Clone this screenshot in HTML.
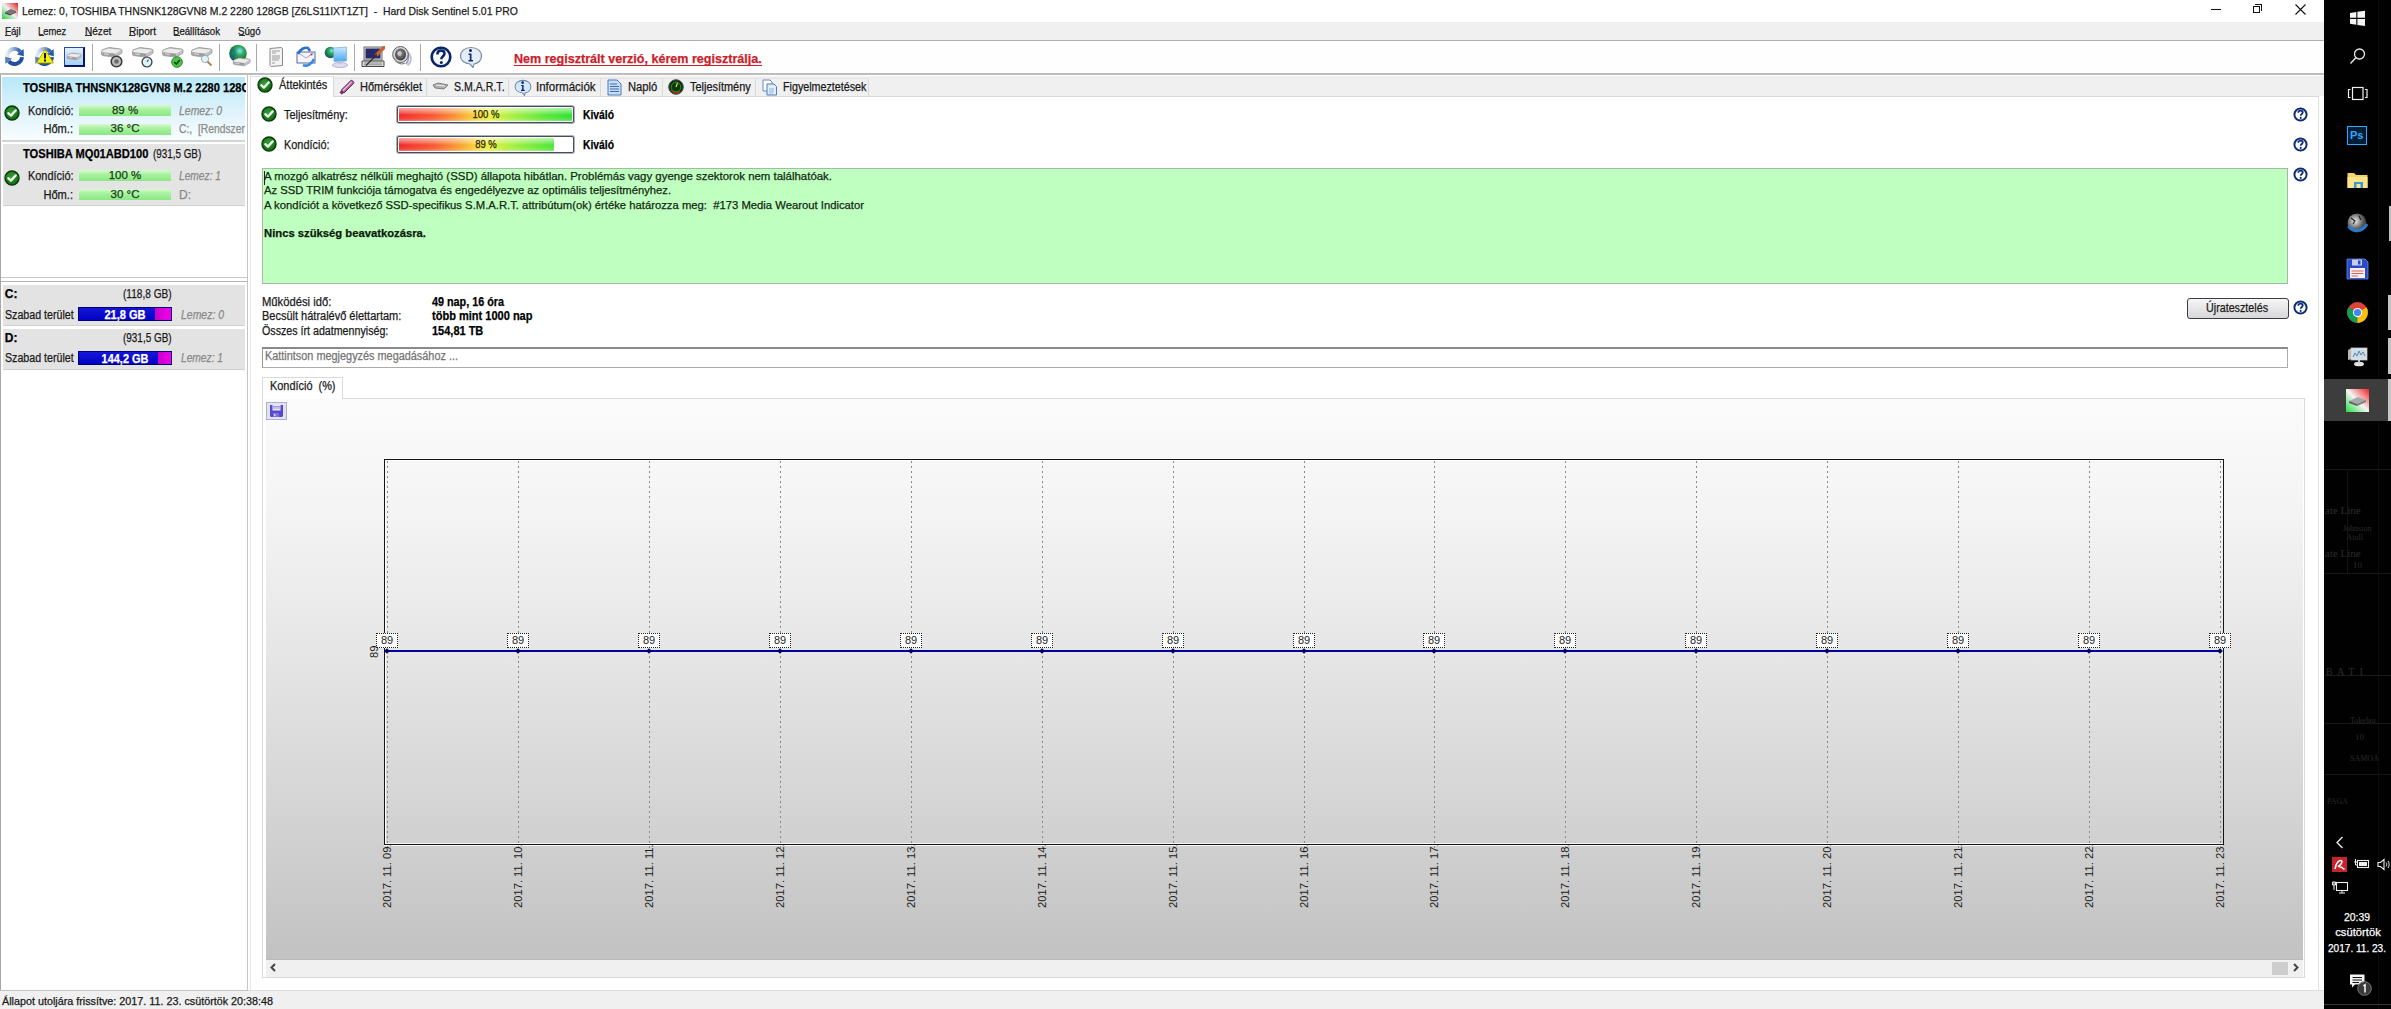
<!DOCTYPE html>
<html><head><meta charset="utf-8">
<style>
html,body{margin:0;padding:0}
body{width:2391px;height:1009px;overflow:hidden;position:relative;background:#fff;font-family:"Liberation Sans",sans-serif}
.a{position:absolute}
.t{position:absolute;line-height:1;white-space:pre;-webkit-text-stroke:0.25px currentColor}
.sep{position:absolute;top:44px;width:1px;height:27px;background:#a8a8a8;border-right:1px solid #fff}
.gbar{position:absolute;left:79px;width:92px;height:11px;background:linear-gradient(#d8fad0,#a8f2a0 40%,#8ae884)}
.bbar{position:absolute;left:78px;width:94px;height:14px;background:linear-gradient(#1818d8,#0000c4);box-shadow:inset 0 0 0 1px #000070}
.bbar i{position:absolute;top:1px;bottom:1px;right:1px;background:linear-gradient(90deg,#c800c8,#f000f0)}
.tab{position:absolute;top:78px;height:18px;background:#f0f0f0;border-top:1px solid #e3e3e3;border-right:1px solid #d9d9d9;box-sizing:border-box}
.pb{position:absolute;left:397px;width:177px;height:17px;margin-top:1px;box-sizing:border-box;border:1px solid #46505a;border-radius:2px;background:#fff;box-shadow:0 0 0 1px rgba(90,100,112,.5)}
.pbf{position:absolute;left:1px;top:1px;bottom:1px;background:linear-gradient(90deg,#f02828 0%,#f85830 20%,#f8a030 35%,#f8d838 45%,#e8f040 52%,#a8f040 65%,#58e838 85%,#30e030 100%)}
.pbf:after{content:"";position:absolute;left:0;right:0;top:0;bottom:0;background:linear-gradient(rgba(255,255,255,.6),rgba(255,255,255,.25) 35%,rgba(255,255,255,0) 55%,rgba(255,255,255,.1) 85%,rgba(255,255,255,.35))}
.help{position:absolute;left:2293px;width:15px;height:15px}
.grid{position:absolute;top:461px;height:388px;width:1px;background:repeating-linear-gradient(#8a8a8a 0 2px,transparent 2px 5px)}
.dl{position:absolute;top:633px;width:22px;height:15px;box-sizing:border-box;border:1px dotted #222;background:#fff;font-size:11px;line-height:13px;text-align:center;color:#222}
.dt{position:absolute;top:848px;width:60px;height:13px;font-size:11.2px;line-height:13px;color:#222;transform-origin:0 0;transform:rotate(-90deg);white-space:pre}
</style></head><body>

<!-- ============ TITLE BAR ============ -->
<svg class="a" style="left:2px;top:3px" width="16" height="16" viewBox="0 0 16 16">
  <defs><linearGradient id="appg" x1="1" y1="0" x2="0" y2="1"><stop offset="0" stop-color="#e02020"/><stop offset=".5" stop-color="#f0f0f0"/><stop offset="1" stop-color="#20d040"/></linearGradient></defs>
  <rect x="0" y="0" width="16" height="16" fill="url(#appg)"/>
  <path d="M3 9 L9 6 L14 8 L8 11 Z" fill="#777"/><path d="M3 9 L8 11 L8 12.5 L3 10.5Z" fill="#444"/><path d="M8 11 L14 8 L14 9.5 L8 12.5Z" fill="#555"/>
</svg>
<div class="a" style="left:2211px;top:9px;width:10px;height:1px;background:#111"></div>
<div class="a" style="left:2253px;top:6px;width:7px;height:7px;border:1px solid #111;box-sizing:border-box;background:#fff"></div>
<div class="a" style="left:2255px;top:4px;width:7px;height:2px;border-top:1px solid #111;border-right:1px solid #111;box-sizing:border-box"></div>
<div class="a" style="left:2261px;top:4px;width:1px;height:7px;background:#111"></div>
<svg class="a" style="left:2295px;top:4px" width="11" height="11"><path d="M0.5 0.5 L10.5 10.5 M10.5 0.5 L0.5 10.5" stroke="#111" stroke-width="1.1"/></svg>

<!-- ============ MENU BAR ============ -->
<div class="a" style="left:0;top:22px;width:2324px;height:18px;background:#f0f0f0"></div>
<div class="a" style="left:0;top:40px;width:2324px;height:1px;background:#b0b0b0"></div>
<div class="a" style="left:5px;top:35px;width:6px;height:1px;background:#333"></div>
<div class="a" style="left:39px;top:35px;width:5px;height:1px;background:#333"></div>
<div class="a" style="left:85px;top:35px;width:7px;height:1px;background:#333"></div>
<div class="a" style="left:129px;top:35px;width:6px;height:1px;background:#333"></div>
<div class="a" style="left:174px;top:35px;width:6px;height:1px;background:#333"></div>
<div class="a" style="left:239px;top:35px;width:6px;height:1px;background:#333"></div>

<!-- ============ TOOLBAR ============ -->
<div class="a" style="left:0;top:41px;width:2324px;height:32px;background:#fefefe"></div>
<div class="a" style="left:0;top:73px;width:2324px;height:2px;background:#bcbcbc"></div>
<div class="sep" style="left:92px"></div>
<div class="sep" style="left:219px"></div>
<div class="sep" style="left:256px"></div>
<div class="sep" style="left:354px"></div>
<div class="sep" style="left:420px"></div>
<div class="a" style="left:514px;top:64.5px;width:248px;height:1px;background:#cc1f2b"></div>

<!-- ============ LEFT PANEL ============ -->
<div class="a" style="left:0;top:75px;width:1px;height:916px;background:#a8a8a8"></div>
<div class="a" style="left:247px;top:75px;width:1px;height:916px;background:#c4c4c4"></div>
<div class="a" style="left:0;top:990px;width:248px;height:1px;background:#c4c4c4"></div>
<div class="a" style="left:1px;top:277px;width:246px;height:1px;background:#c8c8c8"></div>
<div class="a" style="left:1px;top:281px;width:246px;height:1px;background:#b4b4b4"></div>
<!-- item 1 -->
<div class="a" style="left:2px;top:77px;width:243px;height:63px;background:linear-gradient(#b8e8f8,#dff3fb 55%,#f8fdff)"></div>
<div class="a" style="left:2px;top:140px;width:243px;height:2px;background:#d4d4d4"></div>
<!-- item 2 -->
<div class="a" style="left:3px;top:144px;width:242px;height:61px;background:#e4e4e4"></div>
<div class="a" style="left:3px;top:205px;width:242px;height:1px;background:#d0d0d0"></div>
<div class="gbar" style="top:104.5px"></div>
<div class="gbar" style="top:123.5px"></div>
<div class="gbar" style="top:169.5px"></div>
<div class="gbar" style="top:188.5px"></div>
<!-- drives -->
<div class="a" style="left:3px;top:285px;width:242px;height:40px;background:#e3e3e3;border-bottom:1px solid #d0d0d0"></div>
<div class="a" style="left:3px;top:329px;width:242px;height:40px;background:#e3e3e3;border-bottom:1px solid #d0d0d0"></div>
<div class="bbar" style="top:307px"><i style="left:77px"></i></div>
<div class="bbar" style="top:351px"><i style="left:80px"></i></div>
<div class="a" style="left:0;top:75px;width:246px;height:140px;overflow:hidden">
<div class="a" style="left:0;top:-75px;width:246px;height:300px">
<div class="t" id="t8" style="left:22.6px;top:82.04px;font-size:12px;color:#000;font-weight:bold;transform:scaleX(0.9256);transform-origin:0 0;">TOSHIBA THNSNK128GVN8 M.2 2280 128GB</div>
<div class="t" id="t14" style="left:179px;top:122.84px;font-size:12px;color:#8a8a8a;transform:scaleX(0.8588);transform-origin:0 0;">C:,  [Rendszer fenntartott]</div>
</div></div>

<!-- ============ RIGHT PANEL ============ -->
<div class="a" style="left:250px;top:75px;width:1px;height:916px;background:#e4e4e4"></div>
<div class="a" style="left:2318px;top:97px;width:1px;height:894px;background:#e0e0e0"></div>
<div class="a" style="left:251px;top:76px;width:2073px;height:20px;background:#f0f0f0"></div>
<div class="a" style="left:251px;top:96px;width:2068px;height:1px;background:#d9d9d9"></div>
<div class="tab" style="left:334px;width:93px"></div>
<div class="tab" style="left:427px;width:82.4px"></div>
<div class="tab" style="left:509.4px;width:91.4px"></div>
<div class="tab" style="left:600.8px;width:62px"></div>
<div class="tab" style="left:662.8px;width:93.4px"></div>
<div class="tab" style="left:756.2px;width:113px"></div>
<div class="a" style="left:251px;top:76px;width:83px;height:21px;background:#fff;border-right:1px solid #d9d9d9;border-top:1px solid #e0e0e0;box-sizing:border-box"></div>

<!-- progress bars -->
<div class="pb" style="top:105px"><div class="pbf" style="width:173px"></div></div>
<div class="pb" style="top:135px"><div class="pbf" style="width:155px;background-image:linear-gradient(90deg,#f02828 0px,#f85830 35px,#f8a030 61px,#f8d838 78px,#e8f040 90px,#a8f040 112px,#58e838 147px,#30e030 173px)"></div></div>

<!-- green message box -->
<div class="a" style="left:262px;top:167.5px;width:2026px;height:116px;background:#bfffbf;border:1px solid #a8b8a8;box-sizing:border-box"></div>
<div class="a" style="left:264px;top:171px;width:1px;height:14px;background:#222"></div>

<!-- button -->
<div class="a" style="left:2186.5px;top:297.5px;width:102px;height:21px;box-sizing:border-box;border:1px solid #3a3a4a;border-radius:3px;background:linear-gradient(#f6f6f6,#e6e6e6 50%,#d8d8d8)"></div>
<!-- note box -->
<div class="a" style="left:262px;top:347px;width:2026px;height:21px;box-sizing:border-box;border:1px solid #ababab;border-top:2px solid #8a8a8a;border-left-color:#979797;background:#fff"></div>

<!-- chart tab panel -->
<div class="a" style="left:262px;top:397.5px;width:2043px;height:580px;box-sizing:border-box;border:1px solid #dadada;background:#fff"></div>
<div class="a" style="left:262px;top:376.5px;width:81px;height:22px;box-sizing:border-box;border:1px solid #dadada;border-bottom:none;background:#fff"></div>
<div class="a" style="left:266px;top:399px;width:2037px;height:561px;background:linear-gradient(#fbfbfb,#f4f4f4 20%,#e6e6e6 45%,#d6d6d6 70%,#c2c2c2)"></div>
<div class="a" style="left:266px;top:960px;width:2037px;height:17px;background:#f0f0f0"></div>
<div class="a" style="left:2272px;top:961.5px;width:16px;height:13px;background:#cdcdcd"></div>
<svg class="a" style="left:269px;top:963px" width="8" height="9"><path d="M6 1 L2.5 4.5 L6 8" stroke="#444" stroke-width="2" fill="none"/></svg>
<svg class="a" style="left:2292px;top:963px" width="8" height="9"><path d="M2 1 L5.5 4.5 L2 8" stroke="#444" stroke-width="2" fill="none"/></svg>
<!-- save button -->
<div class="a" style="left:266px;top:402px;width:20.5px;height:18px;box-sizing:border-box;border:1px solid #aeb0cc;background:#e2e2f2"></div>
<svg class="a" style="left:269px;top:404px" width="15" height="14" viewBox="0 0 15 14">
  <path d="M1 1 H14 V12 L13 13 H2 L1 12 Z" fill="#5a48c8"/>
  <rect x="3.5" y="1" width="8" height="5.5" fill="#e8e8ff"/><path d="M4 2.5 H11 M4 4 H11" stroke="#8a80d0" stroke-width=".8"/>
  <rect x="4" y="9" width="6" height="4" fill="#7a70e0"/><rect x="5" y="10" width="1.5" height="2" fill="#d0d0ff"/>
</svg>

<div class="a" style="left:384px;top:459px;width:1840px;height:386px;box-sizing:border-box;border:1px solid #141414;box-shadow:inset 1px 1px 0 #fff,inset 0 -1px 0 rgba(255,255,255,.85),0 -1px 0 rgba(255,255,255,.9),0 1px 0 rgba(255,255,255,.85)"></div>
<div class="grid" style="left:387px"></div>
<div class="grid" style="left:518px"></div>
<div class="grid" style="left:649px"></div>
<div class="grid" style="left:780px"></div>
<div class="grid" style="left:911px"></div>
<div class="grid" style="left:1042px"></div>
<div class="grid" style="left:1173px"></div>
<div class="grid" style="left:1304px"></div>
<div class="grid" style="left:1434px"></div>
<div class="grid" style="left:1565px"></div>
<div class="grid" style="left:1696px"></div>
<div class="grid" style="left:1827px"></div>
<div class="grid" style="left:1958px"></div>
<div class="grid" style="left:2089px"></div>
<div class="grid" style="left:2220px"></div>
<div class="a" style="left:385px;top:650px;width:1836px;height:2px;background:#00009a"></div>
<div class="a" style="left:385px;top:648.5px;width:4px;height:4px;background:#000060;transform:rotate(45deg)"></div>
<div class="a" style="left:516px;top:648.5px;width:4px;height:4px;background:#000060;transform:rotate(45deg)"></div>
<div class="a" style="left:647px;top:648.5px;width:4px;height:4px;background:#000060;transform:rotate(45deg)"></div>
<div class="a" style="left:778px;top:648.5px;width:4px;height:4px;background:#000060;transform:rotate(45deg)"></div>
<div class="a" style="left:909px;top:648.5px;width:4px;height:4px;background:#000060;transform:rotate(45deg)"></div>
<div class="a" style="left:1040px;top:648.5px;width:4px;height:4px;background:#000060;transform:rotate(45deg)"></div>
<div class="a" style="left:1171px;top:648.5px;width:4px;height:4px;background:#000060;transform:rotate(45deg)"></div>
<div class="a" style="left:1302px;top:648.5px;width:4px;height:4px;background:#000060;transform:rotate(45deg)"></div>
<div class="a" style="left:1432px;top:648.5px;width:4px;height:4px;background:#000060;transform:rotate(45deg)"></div>
<div class="a" style="left:1563px;top:648.5px;width:4px;height:4px;background:#000060;transform:rotate(45deg)"></div>
<div class="a" style="left:1694px;top:648.5px;width:4px;height:4px;background:#000060;transform:rotate(45deg)"></div>
<div class="a" style="left:1825px;top:648.5px;width:4px;height:4px;background:#000060;transform:rotate(45deg)"></div>
<div class="a" style="left:1956px;top:648.5px;width:4px;height:4px;background:#000060;transform:rotate(45deg)"></div>
<div class="a" style="left:2087px;top:648.5px;width:4px;height:4px;background:#000060;transform:rotate(45deg)"></div>
<div class="a" style="left:2218px;top:648.5px;width:4px;height:4px;background:#000060;transform:rotate(45deg)"></div>
<div class="dl" style="left:376px">89</div>
<div class="dt" style="left:380.5px;top:908px">2017. 11. 09.</div>
<div class="dl" style="left:507px">89</div>
<div class="dt" style="left:511.5px;top:908px">2017. 11. 10.</div>
<div class="dl" style="left:638px">89</div>
<div class="dt" style="left:642.5px;top:908px">2017. 11. 11.</div>
<div class="dl" style="left:769px">89</div>
<div class="dt" style="left:773.5px;top:908px">2017. 11. 12.</div>
<div class="dl" style="left:900px">89</div>
<div class="dt" style="left:904.5px;top:908px">2017. 11. 13.</div>
<div class="dl" style="left:1031px">89</div>
<div class="dt" style="left:1035.5px;top:908px">2017. 11. 14.</div>
<div class="dl" style="left:1162px">89</div>
<div class="dt" style="left:1166.5px;top:908px">2017. 11. 15.</div>
<div class="dl" style="left:1293px">89</div>
<div class="dt" style="left:1297.5px;top:908px">2017. 11. 16.</div>
<div class="dl" style="left:1423px">89</div>
<div class="dt" style="left:1427.5px;top:908px">2017. 11. 17.</div>
<div class="dl" style="left:1554px">89</div>
<div class="dt" style="left:1558.5px;top:908px">2017. 11. 18.</div>
<div class="dl" style="left:1685px">89</div>
<div class="dt" style="left:1689.5px;top:908px">2017. 11. 19.</div>
<div class="dl" style="left:1816px">89</div>
<div class="dt" style="left:1820.5px;top:908px">2017. 11. 20.</div>
<div class="dl" style="left:1947px">89</div>
<div class="dt" style="left:1951.5px;top:908px">2017. 11. 21.</div>
<div class="dl" style="left:2078px">89</div>
<div class="dt" style="left:2082.5px;top:908px">2017. 11. 22.</div>
<div class="dl" style="left:2209px">89</div>
<div class="dt" style="left:2213.5px;top:908px">2017. 11. 23.</div>
<div class="dt" style="left:368px;top:658px;width:14px">89</div>

<!-- status bar -->
<div class="a" style="left:0;top:991px;width:2324px;height:18px;background:#f0f0f0"></div>
<div class="a" style="left:248px;top:990px;width:2076px;height:1px;background:#dedede"></div>
<div class="a" style="left:266px;top:959px;width:2037px;height:1px;background:#bababa"></div>

<!-- ============ TASKBAR ============ -->
<div class="a" style="left:2324px;top:0;width:67px;height:1009px;background:#010101"></div>
<!-- faint wallpaper lines -->
<div class="a" style="left:2378px;top:0;width:1px;height:1009px;background:#0c0c0c"></div>
<div class="a" style="left:2324px;top:1004px;width:67px;height:1px;background:#3a3a3a"></div>
<!-- windows logo -->
<svg class="a" style="left:2349px;top:10px" width="17" height="17" viewBox="0 0 17 17"><path d="M1 3 L7.3 2 L7.3 7.8 L1 7.8 Z M8.4 1.8 L16 0.7 L16 7.8 L8.4 7.8 Z M1 8.9 L7.3 8.9 L7.3 14.7 L1 13.8 Z M8.4 8.9 L16 8.9 L16 16 L8.4 14.9 Z" fill="#f4f4f4"/></svg>
<!-- search -->
<svg class="a" style="left:2349px;top:47px" width="17" height="18" viewBox="0 0 17 18"><circle cx="10.5" cy="7" r="5" fill="none" stroke="#e8e8e8" stroke-width="1.3"/><path d="M7 10.5 L1.5 16.5" stroke="#e8e8e8" stroke-width="1.4"/></svg>
<!-- task view -->
<svg class="a" style="left:2347px;top:86px" width="22" height="15" viewBox="0 0 22 15"><rect x="5.5" y="1.5" width="10.5" height="12" fill="none" stroke="#f0f0f0" stroke-width="1.2"/><path d="M3.5 3.5 H1.5 V11.5 H3.5 M18 3.5 H20 V11.5 H18" fill="none" stroke="#f0f0f0" stroke-width="1.2"/></svg>
<!-- Ps -->
<div class="a" style="left:2347px;top:126px;width:20px;height:18.5px;box-sizing:border-box;border:1.5px solid #31a8ff;background:#001e36"></div>
<div class="a" style="left:2350px;top:128px;font:bold 11px/14px 'Liberation Sans',sans-serif;color:#31a8ff">Ps</div>
<!-- folder -->
<svg class="a" style="left:2347px;top:172px" width="21" height="17" viewBox="0 0 21 17"><path d="M0.5 1 H7 L9 3 H20.5 V16 H0.5 Z" fill="#f6d36a"/><path d="M0.5 5 H20.5 V16 H0.5 Z" fill="#fde48a"/><rect x="7" y="10" width="9" height="6" fill="#3a98d8"/><rect x="9.5" y="12" width="4" height="4" fill="#fde48a"/></svg>
<!-- globe -->
<svg class="a" style="left:2346px;top:212px" width="23" height="22" viewBox="0 0 23 22"><defs><radialGradient id="tbg" cx=".4" cy=".4" r=".6"><stop offset="0" stop-color="#f0f0f0"/><stop offset=".6" stop-color="#707070"/><stop offset="1" stop-color="#303030"/></radialGradient></defs><circle cx="11" cy="11" r="9.5" fill="url(#tbg)"/><path d="M2.5 14 C6 20 16 21 21 12" stroke="#2a7ad0" stroke-width="3" fill="none"/><path d="M5 6 L9 9 L7 12 M13 4 L15 8" stroke="#222" stroke-width="1.2" fill="none"/></svg>
<div class="a" style="left:2389px;top:206px;width:2px;height:35px;background:#c0c0c0"></div>
<!-- floppy -->
<svg class="a" style="left:2346px;top:257.5px" width="23" height="22" viewBox="0 0 23 22"><path d="M1 1 H19 L22 4 V21 H1 Z" fill="#2a4ac8" stroke="#6a8af0" stroke-width=".8"/><rect x="6" y="1.5" width="10" height="6" fill="#c8d0f0"/><rect x="12" y="2.5" width="2.5" height="4" fill="#2a4ac8"/><rect x="4" y="10" width="15" height="10" fill="#f8f0f0"/><path d="M5.5 13 H17.5 M5.5 15.5 H17.5 M5.5 18 H12" stroke="#d05050" stroke-width=".9"/></svg>
<!-- chrome -->
<svg class="a" style="left:2346px;top:301px" width="23" height="23" viewBox="0 0 23 23"><circle cx="11.5" cy="11.5" r="10.4" fill="#db4437"/><path d="M11.5 11.5 L2.5 6.3 A10.4 10.4 0 0 0 11.5 21.9 Z" fill="#0f9d58"/><path d="M11.5 11.5 L11.5 21.9 A10.4 10.4 0 0 0 20.5 6.3 Z" fill="#f4c20d"/><path d="M11.5 11.5 L20.5 6.3 L11.5 6.3Z" fill="#db4437"/><circle cx="11.5" cy="11.5" r="4.6" fill="#fff"/><circle cx="11.5" cy="11.5" r="3.6" fill="#4285f4"/></svg>
<div class="a" style="left:2387.5px;top:294.5px;width:3.5px;height:35px;background:#c4c4c4"></div>
<!-- monitor -->
<svg class="a" style="left:2347px;top:346px" width="21" height="21" viewBox="0 0 21 21"><path d="M1 4 L5 2 L5 13 L1 14 Z" fill="#b8b8b8"/><rect x="4" y="2" width="16" height="12" fill="#e8e8e8" stroke="#c0c0c0" stroke-width=".8"/><rect x="5.5" y="3.5" width="13" height="9" fill="#c8dcec"/><path d="M6 11 L8 7 L10 10 L12 5 L14 9 L16 6 L18 10" stroke="#5a7a9a" stroke-width=".9" fill="none"/><ellipse cx="12" cy="18" rx="5" ry="2.3" fill="#e0e0e0"/><rect x="11" y="14" width="2" height="3" fill="#c8c8c8"/></svg>
<div class="a" style="left:2387.5px;top:338px;width:3.5px;height:36px;background:#c4c4c4"></div>
<!-- HDS active -->
<div class="a" style="left:2324px;top:378.5px;width:63.5px;height:42.5px;background:#3d3d3d"></div>
<div class="a" style="left:2387.5px;top:378.5px;width:3.5px;height:42.5px;background:#c8c8c8"></div>
<svg class="a" style="left:2346px;top:388.5px" width="23" height="23" viewBox="0 0 23 23"><defs><linearGradient id="hdsg" x1="1" y1="0" x2="0" y2="1"><stop offset="0" stop-color="#f02020"/><stop offset=".5" stop-color="#f4f4f4"/><stop offset="1" stop-color="#20e040"/></linearGradient></defs><rect x="0" y="0" width="23" height="23" fill="url(#hdsg)"/><path d="M3 12 L12 8 L20 11 L11 15 Z" fill="#a8a8a8"/><path d="M3 12 L11 15 L11 17 L3 14Z" fill="#606060"/><path d="M11 15 L20 11 L20 13 L11 17Z" fill="#7a7a7a"/></svg>
<!-- tray -->
<svg class="a" style="left:2335px;top:836px" width="9" height="13" viewBox="0 0 9 13"><path d="M7.5 1 L2 6.5 L7.5 12" stroke="#f0f0f0" stroke-width="1.3" fill="none"/></svg>
<div class="a" style="left:2332px;top:856.5px;width:15px;height:15px;background:#c8232c"></div>
<svg class="a" style="left:2332px;top:856.5px" width="15" height="15" viewBox="0 0 15 15"><path d="M3 12 C4 6 7 3 9 3.5 C11 4 9.5 8 6 9.5 C8 9 10 10 12.5 12.5" stroke="#fff" stroke-width="1.5" fill="none"/></svg>
<svg class="a" style="left:2353px;top:858px" width="17" height="11" viewBox="0 0 17 11"><rect x="4.5" y="2.5" width="11" height="7" fill="none" stroke="#eee" stroke-width="1.1"/><rect x="6" y="4" width="8" height="4" fill="#eee"/><path d="M2.5 1 V4 M1 4 H4 M2.5 4 V7 H4.5" stroke="#eee" stroke-width="1" fill="none"/></svg>
<svg class="a" style="left:2377px;top:858px" width="14" height="13" viewBox="0 0 14 13"><path d="M1 4.5 H3.5 L7 1.5 V11.5 L3.5 8.5 H1 Z" fill="none" stroke="#eee" stroke-width="1.1"/><path d="M9 4.5 C10 5.5 10 7.5 9 8.5 M11 3 C12.5 5 12.5 8 11 10" stroke="#eee" stroke-width="1" fill="none"/></svg>
<svg class="a" style="left:2332px;top:881px" width="16" height="13" viewBox="0 0 16 13"><rect x="4.5" y="1.5" width="11" height="8" fill="none" stroke="#eee" stroke-width="1.1"/><path d="M10 9.5 V12 M7 12 H13 M2 1 V9 M0.5 1 H3.5 V4 H0.5 Z" stroke="#eee" stroke-width="1" fill="none"/></svg>
<!-- notifications -->
<svg class="a" style="left:2349px;top:973px" width="24" height="24" viewBox="0 0 24 24"><path d="M1 1.5 H15.5 V11.5 H6 L3 14.5 V11.5 H1 Z" fill="#f4f4f4"/><path d="M3.5 4.5 H13 M3.5 7 H13 M3.5 9.5 H10" stroke="#111" stroke-width="1"/><circle cx="15.5" cy="15.5" r="6.8" fill="#3a3a3a" stroke="#777" stroke-width="1"/><path d="M14.3 12.8 L16 11.8 V19.5" stroke="#fff" stroke-width="1.5" fill="none"/></svg>

<!-- faint wallpaper -->
<div class="a" style="left:2324px;top:469px;width:67px;height:1px;background:#1a1a1a"></div>
<div class="a" style="left:2324px;top:573px;width:67px;height:1px;background:#161616"></div>
<div class="a" style="left:2324px;top:675px;width:67px;height:1px;background:#1a1a1a"></div>
<div class="a" style="left:2324px;top:723px;width:67px;height:1px;background:#181818"></div>
<div class="a" style="left:2324px;top:774px;width:67px;height:1px;background:#161616"></div>
<div class="a" style="left:2347px;top:469px;width:1px;height:105px;background:#141414"></div>
<div class="a" style="left:2325px;top:504px;font:11px/12px 'Liberation Serif',serif;color:#2c2c2c;white-space:pre">ate Line</div>
<div class="a" style="left:2343px;top:524px;font:8px/9px 'Liberation Serif',serif;color:#2a2a2a;white-space:pre">Johnston
  Atoll</div>
<div class="a" style="left:2325px;top:547px;font:11px/12px 'Liberation Serif',serif;color:#2c2c2c;white-space:pre">ate Line</div>
<div class="a" style="left:2353px;top:560px;font:9px/10px 'Liberation Serif',serif;color:#2a2a2a">10</div>
<div class="a" style="left:2326px;top:666px;font:10px/11px 'Liberation Serif',serif;color:#2c2c2c;white-space:pre">B  A  T  I</div>
<div class="a" style="left:2350px;top:716px;font:8px/9px 'Liberation Serif',serif;color:#2a2a2a">Tokelau</div>
<div class="a" style="left:2355px;top:732px;font:9px/10px 'Liberation Serif',serif;color:#2a2a2a">10</div>
<div class="a" style="left:2350px;top:754px;font:8px/9px 'Liberation Serif',serif;color:#2a2a2a">SAMOA</div>
<div class="a" style="left:2327px;top:797px;font:8px/9px 'Liberation Serif',serif;color:#262626">PAGA</div>


<svg width="0" height="0" style="position:absolute"><defs>
 <linearGradient id="arcA" x1="0" y1="0" x2="1" y2="0"><stop offset="0" stop-color="#e8eef8"/><stop offset=".45" stop-color="#9ab4d8"/><stop offset="1" stop-color="#2a5aa8"/></linearGradient>
 <radialGradient id="chk" cx=".45" cy=".4" r=".6"><stop offset="0" stop-color="#3a9a3a"/><stop offset="1" stop-color="#126a12"/></radialGradient>
 <linearGradient id="slab" x1="0" y1="0" x2="0" y2="1"><stop offset="0" stop-color="#f0f0f0"/><stop offset=".5" stop-color="#c8c8c8"/><stop offset="1" stop-color="#8a8a8a"/></linearGradient>
 <radialGradient id="globe" cx=".6" cy=".35" r=".7"><stop offset="0" stop-color="#80e8ff"/><stop offset=".35" stop-color="#30a860"/><stop offset=".7" stop-color="#1a7a3a"/><stop offset="1" stop-color="#1040b0"/></radialGradient>
 <linearGradient id="mon" x1="0" y1="0" x2="0" y2="1"><stop offset="0" stop-color="#c8ecff"/><stop offset="1" stop-color="#48a8f0"/></linearGradient>
 <symbol id="disk" viewBox="0 0 23 11"><path d="M1.5 4.5 Q1.5 3.2 3 2.6 L8 0.8 Q9 0.5 10 0.6 L20.5 2 Q22 2.3 22 3.5 L22 5.5 Q22 6.3 21 6.8 L15.5 9.8 Q14.8 10.2 13.8 10.1 L2.8 8.6 Q1.5 8.3 1.5 7.2 Z" fill="#b4b4b4" stroke="#8c8c8c" stroke-width=".7"/><path d="M2 4.6 Q2 3.6 3.5 3.1 L8.3 1.4 L20.5 2.8 Q21.5 3 20.8 3.6 L15.5 6.6 L3 5.3 Z" fill="#ececec"/><path d="M3 5.6 L15 7 L15 9.5 L3 8 Z" fill="#9a9a9a"/><path d="M15.3 7 L21.4 3.8 L21.4 6 L15.3 9.3 Z" fill="#c4c4c4"/><path d="M4 6.8 L9 7.4" stroke="#f4f4f4" stroke-width=".8"/></symbol>
 <symbol id="chkI" viewBox="0 0 16 16"><circle cx="8" cy="8" r="7" fill="url(#chk)" stroke="#0a3a0a" stroke-width="1.4"/><path d="M4.3 8.2 L6.9 10.6 L11.7 5.4" stroke="#e8ffe8" stroke-width="2.3" fill="none" stroke-linecap="round" stroke-linejoin="round"/></symbol>
 <symbol id="helpI" viewBox="0 0 16 16"><circle cx="8" cy="8" r="6.5" fill="#fff" stroke="#0e2c70" stroke-width="2.1"/><path d="M5.6 6.2 C5.6 4.6 6.7 3.8 8 3.8 C9.4 3.8 10.4 4.7 10.4 5.9 C10.4 7.4 8.2 7.6 8.2 9.4" stroke="#0e2c70" stroke-width="1.9" fill="none"/><circle cx="8.2" cy="11.6" r="1.1" fill="#0e2c70"/></symbol>
</defs></svg>

<!-- refresh -->
<svg class="a" style="left:3px;top:45px" width="24" height="24" viewBox="0 0 24 24">
 <path d="M4.1 12.8 A7.5 7.5 0 0 1 17.25 6.68" stroke="url(#arcA)" stroke-width="4" fill="none"/>
 <path d="M13.9 9.5 L20.6 3.9 L20.9 11.2 Z" fill="#2a5aa8"/>
 <path d="M18.97 12.15 A7.5 7.5 0 0 1 5.75 16.3" stroke="#22509e" stroke-width="4" fill="none"/>
 <path d="M9.1 13.6 L2.4 19.1 L2.1 11.8 Z" fill="#5a80b8"/>
</svg>
<!-- warning refresh -->
<svg class="a" style="left:33px;top:45px" width="24" height="24" viewBox="0 0 24 24">
 <path d="M4.1 12.8 A7.5 7.5 0 0 1 17.25 6.68" stroke="url(#arcA)" stroke-width="4" fill="none"/>
 <path d="M13.9 9.5 L20.6 3.9 L20.9 11.2 Z" fill="#2a5aa8"/>
 <path d="M18.97 12.15 A7.5 7.5 0 0 1 5.75 16.3" stroke="#22509e" stroke-width="4" fill="none"/>
 <path d="M9.1 13.6 L2.4 19.1 L2.1 11.8 Z" fill="#5a80b8"/>
 <path d="M12 4.5 L20.5 18 L3.5 18 Z" fill="#f4f010" stroke="#a8a000" stroke-width=".8"/>
 <rect x="11" y="8" width="2" height="5.5" fill="#111"/><rect x="11" y="14.5" width="2" height="2" fill="#111"/>
</svg>
<!-- disk box -->
<div class="a" style="left:64px;top:46.5px;width:21px;height:20.5px;box-sizing:border-box;border:1px solid #2848a8;border-right:2px solid #0a1660;border-bottom:2px solid #0a1660;background:linear-gradient(#e0f0ff,#a8d0f4)"></div>
<svg class="a" style="left:66px;top:52px" width="16" height="9"><use href="#disk" width="16" height="9"/></svg>
<!-- disks -->
<svg class="a" style="left:100px;top:46.5px" width="23" height="11"><use href="#disk" width="23" height="11"/></svg>
<svg class="a" style="left:110px;top:55px" width="13" height="13" viewBox="0 0 13 13"><circle cx="6.5" cy="6.5" r="5.3" fill="#bdbdbd" stroke="#3a3a3a" stroke-width="1.6"/><circle cx="6.5" cy="6.5" r="2.3" fill="#6a6a6a"/></svg>
<svg class="a" style="left:130.5px;top:46.5px" width="23" height="11"><use href="#disk" width="23" height="11"/></svg>
<svg class="a" style="left:140.5px;top:56px" width="12" height="12" viewBox="0 0 12 12"><circle cx="6" cy="6" r="4.9" fill="#e0f4fc" stroke="#4a4a4a" stroke-width="1.4"/><path d="M6 6 L7.5 3.5" stroke="#3a6a9a" stroke-width="1.3"/></svg>
<svg class="a" style="left:160.5px;top:46.5px" width="23" height="11"><use href="#disk" width="23" height="11"/></svg>
<svg class="a" style="left:170.5px;top:56px" width="12" height="12" viewBox="0 0 12 12"><circle cx="6" cy="6" r="5.3" fill="#50c050" stroke="#2a8a2a" stroke-width="1"/><path d="M3.2 6 L5.3 8 L8.8 4" stroke="#0a4a0a" stroke-width="1.6" fill="none"/></svg>
<svg class="a" style="left:190px;top:46.5px" width="23" height="11"><use href="#disk" width="23" height="11"/></svg>
<svg class="a" style="left:200px;top:54px" width="13" height="13" viewBox="0 0 13 13"><circle cx="5" cy="5" r="3.6" fill="#dff4fa" stroke="#9ab0b8" stroke-width="1"/><path d="M7.5 7.5 L11.5 11.5" stroke="#b08040" stroke-width="1.8"/></svg>
<!-- globe + disk -->
<svg class="a" style="left:228px;top:44px" width="24" height="24" viewBox="0 0 24 24"><circle cx="10" cy="9.5" r="8.8" fill="url(#globe)"/><path d="M4 5 C7 7 8 10 5 14" stroke="#2060c0" stroke-width="2" fill="none" opacity=".6"/></svg>
<svg class="a" style="left:232px;top:57px" width="19" height="10"><use href="#disk" width="19" height="10"/></svg>
<!-- doc -->
<svg class="a" style="left:269px;top:47px" width="15" height="20" viewBox="0 0 15 20"><path d="M1 1.5 L12 0.5 L13.5 1.5 L13.5 18.5 L2 19.5 L1 18.5 Z" fill="#f4f4f4" stroke="#8a8a8a" stroke-width="1"/><path d="M3 4 H11 M3 6 H7 M3 9 H11 M3 11 H11 M3 13 H10 M3 16 H6" stroke="#9a9a9a" stroke-width="1.1"/></svg>
<!-- sync mail -->
<svg class="a" style="left:296px;top:46px" width="20" height="22" viewBox="0 0 20 22"><rect x="1" y="6" width="18" height="11" fill="#f4f4fa" stroke="#5a6a9a" stroke-width="1"/><path d="M1 6 L10 12 L19 6" stroke="#9aa8c8" fill="none"/><path d="M2 8 C4 3 9 1 12 2 L14 5" stroke="#2a70d0" stroke-width="2.6" fill="none"/><path d="M18 13 C16 18 11 21 7 19" stroke="#3a88e0" stroke-width="2.6" fill="none"/><circle cx="15.5" cy="8.5" r="1" fill="#c03040"/></svg>
<!-- globe monitor -->
<svg class="a" style="left:324px;top:46px" width="25" height="22" viewBox="0 0 25 22"><circle cx="6.5" cy="6.5" r="5.8" fill="url(#globe)"/><path d="M9.5 2 L22.5 1 L22.5 15 L10 15.5 Z" fill="url(#mon)" stroke="#8ab0d0" stroke-width=".8"/><ellipse cx="16" cy="19" rx="7.5" ry="2.6" fill="#dcdcec" stroke="#a8a8c8" stroke-width=".8"/><rect x="14.5" y="15" width="3" height="3" fill="#b8c8d8"/></svg>
<!-- laptop tools -->
<svg class="a" style="left:361px;top:46px" width="24" height="23" viewBox="0 0 24 23"><rect x="3" y="1" width="18" height="13" fill="#d8d8d8" stroke="#707070" stroke-width="1"/><rect x="4.5" y="2.5" width="15" height="10" fill="#2a2a6a"/><path d="M1 15 L23 15 L23 20.5 L1 20.5 Z" fill="#dedede" stroke="#4a4a4a" stroke-width="1"/><path d="M3 17 H21 M3 18.8 H21" stroke="#7a7a7a" stroke-width=".8"/><path d="M23 1.5 L16 8.5" stroke="#c86030" stroke-width="3.5" stroke-linecap="round"/><path d="M16 8.5 L5 19.5" stroke="#303030" stroke-width="1.3"/></svg>
<!-- speaker -->
<svg class="a" style="left:392px;top:46px" width="23" height="21" viewBox="0 0 23 21"><defs><radialGradient id="spk" cx=".45" cy=".4" r=".6"><stop offset="0" stop-color="#b0b0b0"/><stop offset=".5" stop-color="#6a6a6a"/><stop offset="1" stop-color="#3a3a3a"/></radialGradient></defs><path d="M13 4 C17 7 18 13 14 18" stroke="#9a9ab8" stroke-width="1.6" fill="none"/><path d="M16 6.5 C20 10 20 16 15.5 19.5" stroke="#b8b8d8" stroke-width="1.6" fill="none"/><ellipse cx="8.5" cy="8.5" rx="7.8" ry="8" fill="#d8d8d8" stroke="#5a5a5a" stroke-width="1"/><ellipse cx="8.5" cy="8.5" rx="5.5" ry="6" fill="url(#spk)"/><ellipse cx="7.5" cy="7.5" rx="2" ry="2.3" fill="#c8c8c8"/><path d="M2 12 C4 17 9 19 13 17" stroke="#8a8a8a" stroke-width="1.3" fill="none"/></svg>
<!-- help -->
<svg class="a" style="left:429.5px;top:46px" width="22" height="22" viewBox="0 0 22 22"><circle cx="11" cy="11" r="9.3" fill="#f4f8ff" stroke="#0a2468" stroke-width="2.6"/><path d="M7.4 8.4 C7.4 5.8 9.2 4.6 11 4.6 C13 4.6 14.5 5.9 14.5 7.7 C14.5 10.2 11.3 10.4 11.3 13.2" stroke="#0a2468" stroke-width="2.5" fill="none"/><circle cx="11.3" cy="16.5" r="1.5" fill="#0a2468"/></svg>
<!-- info bubble -->
<svg class="a" style="left:458.5px;top:46px" width="24" height="22" viewBox="0 0 24 22"><path d="M12 1.5 C18 1.5 22.5 5 22.5 10 C22.5 14.5 19 17.5 15 18 L14 21.5 L11 18 C5.5 17.7 1.5 14.5 1.5 10 C1.5 5 6 1.5 12 1.5 Z" fill="#e4eef8" stroke="#7a8a9a" stroke-width="1.2"/><circle cx="11.5" cy="4.5" r="1.5" fill="#0e2a70"/><path d="M9.5 7.5 H12.5 V14 H14 V15.5 H9.5 V14 H10.8 V9 H9.5 Z" fill="#0e2a70"/></svg>

<!-- left panel check icons -->
<svg class="a" style="left:4px;top:104.5px" width="16" height="16"><use href="#chkI"/></svg>
<svg class="a" style="left:4px;top:170px" width="16" height="16"><use href="#chkI"/></svg>
<!-- tab icons -->
<svg class="a" style="left:256.5px;top:76.5px" width="16" height="16"><use href="#chkI"/></svg>
<svg class="a" style="left:338px;top:78px" width="18" height="18" viewBox="0 0 18 18"><path d="M3.2 12.2 L12.6 2.8 Q13.6 1.8 14.8 3 L15.3 3.5 Q16.4 4.6 15.4 5.6 L6 15 Z" fill="#b8609e" stroke="#5a2a50" stroke-width="1"/><path d="M5 12.5 L13.6 3.9" stroke="#f4c8e8" stroke-width="1.1"/><path d="M3.2 12.2 L6 15 L3.5 16.5 L1.6 14.6 Z" fill="#6a3a60"/></svg>
<svg class="a" style="left:432px;top:81px" width="18" height="11" viewBox="0 0 18 11"><path d="M1 4 L6 2 L16 4 L12 8 L3 7 Z" fill="#b0b0b0" stroke="#6a6a6a" stroke-width=".8"/><path d="M4 4 L13 5" stroke="#fff" stroke-width=".8"/></svg>
<svg class="a" style="left:514px;top:78.5px" width="18" height="17" viewBox="0 0 24 22"><path d="M12 1.5 C18 1.5 22.5 5 22.5 10 C22.5 14.5 19 17.5 15 18 L14 21.5 L11 18 C5.5 17.7 1.5 14.5 1.5 10 C1.5 5 6 1.5 12 1.5 Z" fill="#d4e6f8" stroke="#6a8aaa" stroke-width="1.4"/><circle cx="11.5" cy="4.5" r="1.8" fill="#0e2a70"/><path d="M9.5 7.5 H12.8 V14 H14.3 V15.8 H9.3 V14 H10.8 V9 H9.5 Z" fill="#0e2a70"/></svg>
<svg class="a" style="left:607px;top:79px" width="15" height="17" viewBox="0 0 15 17"><path d="M1 1 L10 1 L14 5 L14 16 L1 16 Z" fill="#c8dcf4" stroke="#4a7ac0" stroke-width="1"/><path d="M3 5 H10 M3 7.5 H12 M3 10 H12 M3 12.5 H12" stroke="#3a6ab8" stroke-width="1.1"/></svg>
<svg class="a" style="left:668px;top:79px" width="16" height="16" viewBox="0 0 16 16"><circle cx="8" cy="8" r="7.3" fill="#1a2a1a" stroke="#3a5a3a" stroke-width="1"/><circle cx="8" cy="8" r="4.8" fill="#0a3a0a" stroke="#2a8a2a" stroke-width="1"/><path d="M8 8 L9.5 4" stroke="#e8e060" stroke-width="1.2"/><path d="M3 11 A6 6 0 0 0 12 12.5" stroke="#c03020" stroke-width="1.2" fill="none"/></svg>
<svg class="a" style="left:762px;top:79px" width="16" height="17" viewBox="0 0 16 17"><path d="M1 1 H8 L10 3 V12 H1 Z" fill="#fff" stroke="#6a8ab8" stroke-width="1"/><path d="M5 5 H12 L14.5 7.5 V16 H5 Z" fill="#e4eefa" stroke="#4a7ac0" stroke-width="1"/><path d="M7 10 H12 M7 12 H12 M7 14 H11" stroke="#8aa8d8" stroke-width=".9"/></svg>
<!-- row check icons -->
<svg class="a" style="left:260.5px;top:105.5px" width="16" height="16"><use href="#chkI"/></svg>
<svg class="a" style="left:260.5px;top:135.5px" width="16" height="16"><use href="#chkI"/></svg>
<!-- help icons -->
<svg class="help" style="top:106.5px"><use href="#helpI"/></svg>
<svg class="help" style="top:136.5px"><use href="#helpI"/></svg>
<svg class="help" style="top:166.5px"><use href="#helpI"/></svg>
<svg class="help" style="top:299.5px"><use href="#helpI"/></svg>

<div class="t" id="t0" style="left:22px;top:5.08px;font-size:11.6px;color:#1a1a1a;transform:scaleX(0.8995);transform-origin:0 0;">Lemez: 0, TOSHIBA THNSNK128GVN8 M.2 2280 128GB [Z6LS11IXT1ZT]  -  Hard Disk Sentinel 5.01 PRO</div>
<div class="t" id="t1" style="left:5px;top:25.62px;font-size:10.6px;color:#1a1a1a;transform:scaleX(0.9193);transform-origin:0 0;">Fájl</div>
<div class="t" id="t2" style="left:38.3px;top:25.62px;font-size:10.6px;color:#1a1a1a;transform:scaleX(0.8869);transform-origin:0 0;">Lemez</div>
<div class="t" id="t3" style="left:84.7px;top:25.62px;font-size:10.6px;color:#1a1a1a;transform:scaleX(0.9499);transform-origin:0 0;">Nézet</div>
<div class="t" id="t4" style="left:128.6px;top:25.62px;font-size:10.6px;color:#1a1a1a;transform:scaleX(0.9552);transform-origin:0 0;">Riport</div>
<div class="t" id="t5" style="left:173px;top:25.62px;font-size:10.6px;color:#1a1a1a;transform:scaleX(0.9068);transform-origin:0 0;">Beállítások</div>
<div class="t" id="t6" style="left:238.4px;top:25.62px;font-size:10.6px;color:#1a1a1a;transform:scaleX(0.9131);transform-origin:0 0;">Súgó</div>
<div class="t" id="t7" style="left:514px;top:52.52px;font-size:12.5px;color:#cc1f2b;font-weight:bold;transform:scaleX(1.0043);transform-origin:0 0;">Nem regisztrált verzió, kérem regisztrálja.</div>
<div class="t" id="t9" style="left:27.5px;top:104.54px;font-size:12px;color:#1a1a1a;transform:scaleX(0.9091);transform-origin:0 0;">Kondíció:</div>
<div class="t" id="t10" style="left:73px;top:122.84px;font-size:12px;color:#1a1a1a;transform:translateX(-100%) scaleX(0.9245);transform-origin:100% 0;">Hőm.:</div>
<div class="t" id="t11" style="left:125px;top:104.96px;font-size:11.5px;color:#1a3a1a;transform:translateX(-50%);">89 %</div>
<div class="t" id="t12" style="left:125px;top:123.26px;font-size:11.5px;color:#1a3a1a;transform:translateX(-50%);">36 °C</div>
<div class="t" id="t13" style="left:179px;top:104.54px;font-size:12px;color:#8a8a8a;font-style:italic;transform:scaleX(0.8712);transform-origin:0 0;">Lemez: 0</div>
<div class="t" id="t15" style="left:22.6px;top:147.54px;font-size:12px;color:#000;font-weight:bold;transform:scaleX(0.9263);transform-origin:0 0;">TOSHIBA MQ01ABD100</div>
<div class="t" id="t16" style="left:152.6px;top:147.54px;font-size:12px;color:#1a1a1a;transform:scaleX(0.8211);transform-origin:0 0;">(931,5 GB)</div>
<div class="t" id="t17" style="left:27.5px;top:169.84px;font-size:12px;color:#1a1a1a;transform:scaleX(0.9091);transform-origin:0 0;">Kondíció:</div>
<div class="t" id="t18" style="left:73px;top:188.84px;font-size:12px;color:#1a1a1a;transform:translateX(-100%) scaleX(0.9245);transform-origin:100% 0;">Hőm.:</div>
<div class="t" id="t19" style="left:125px;top:170.26px;font-size:11.5px;color:#1a3a1a;transform:translateX(-50%);">100 %</div>
<div class="t" id="t20" style="left:125px;top:189.26px;font-size:11.5px;color:#1a3a1a;transform:translateX(-50%);">30 °C</div>
<div class="t" id="t21" style="left:179px;top:169.84px;font-size:12px;color:#8a8a8a;font-style:italic;transform:scaleX(0.8509);transform-origin:0 0;">Lemez: 1</div>
<div class="t" id="t22" style="left:179px;top:188.84px;font-size:12px;color:#8a8a8a;">D:</div>
<div class="t" id="t23" style="left:4.75px;top:287.54px;font-size:12px;color:#000;font-weight:bold;">C:</div>
<div class="t" id="t24" style="left:122.8px;top:287.54px;font-size:12px;color:#1a1a1a;transform:scaleX(0.8406);transform-origin:0 0;">(118,8 GB)</div>
<div class="t" id="t25" style="left:4.6px;top:308.74px;font-size:12px;color:#1a1a1a;transform:scaleX(0.8877);transform-origin:0 0;">Szabad terület</div>
<div class="t" id="t26" style="left:125px;top:309.04px;font-size:12px;color:#fff;font-weight:bold;transform:translateX(-50%) scaleX(0.9216);">21,8 GB</div>
<div class="t" id="t27" style="left:181.3px;top:308.74px;font-size:12px;color:#8a8a8a;font-style:italic;transform:scaleX(0.8712);transform-origin:0 0;">Lemez: 0</div>
<div class="t" id="t28" style="left:4.75px;top:331.54px;font-size:12px;color:#000;font-weight:bold;">D:</div>
<div class="t" id="t29" style="left:122.8px;top:331.54px;font-size:12px;color:#1a1a1a;transform:scaleX(0.8279);transform-origin:0 0;">(931,5 GB)</div>
<div class="t" id="t30" style="left:4.6px;top:352.34px;font-size:12px;color:#1a1a1a;transform:scaleX(0.8877);transform-origin:0 0;">Szabad terület</div>
<div class="t" id="t31" style="left:125px;top:352.84px;font-size:12px;color:#fff;font-weight:bold;transform:translateX(-50%) scaleX(0.9109);">144,2 GB</div>
<div class="t" id="t32" style="left:181.3px;top:352.34px;font-size:12px;color:#8a8a8a;font-style:italic;transform:scaleX(0.8509);transform-origin:0 0;">Lemez: 1</div>
<div class="t" id="t33" style="left:2.4px;top:995.82px;font-size:10.6px;color:#1a1a1a;transform:scaleX(1.0166);transform-origin:0 0;">Állapot utoljára frissítve: 2017. 11. 23. csütörtök 20:38:48</div>
<div class="t" id="t34" style="left:279.3px;top:79.44px;font-size:12px;color:#1a1a1a;transform:scaleX(0.9165);transform-origin:0 0;">Áttekintés</div>
<div class="t" id="t35" style="left:360px;top:81.24px;font-size:12px;color:#1a1a1a;transform:scaleX(0.9204);transform-origin:0 0;">Hőmérséklet</div>
<div class="t" id="t36" style="left:454.2px;top:81.24px;font-size:12px;color:#1a1a1a;transform:scaleX(0.8824);transform-origin:0 0;">S.M.A.R.T.</div>
<div class="t" id="t37" style="left:536.4px;top:81.24px;font-size:12px;color:#1a1a1a;transform:scaleX(0.9608);transform-origin:0 0;">Információk</div>
<div class="t" id="t38" style="left:627.7px;top:81.24px;font-size:12px;color:#1a1a1a;transform:scaleX(0.9343);transform-origin:0 0;">Napló</div>
<div class="t" id="t39" style="left:690.3px;top:81.24px;font-size:12px;color:#1a1a1a;transform:scaleX(0.9100);transform-origin:0 0;">Teljesítmény</div>
<div class="t" id="t40" style="left:782.6px;top:81.24px;font-size:12px;color:#1a1a1a;transform:scaleX(0.8932);transform-origin:0 0;">Figyelmeztetések</div>
<div class="t" id="t41" style="left:284.4px;top:108.84px;font-size:12px;color:#1a1a1a;transform:scaleX(0.9096);transform-origin:0 0;">Teljesítmény:</div>
<div class="t" id="t42" style="left:284.4px;top:138.84px;font-size:12px;color:#1a1a1a;transform:scaleX(0.9091);transform-origin:0 0;">Kondíció:</div>
<div class="t" id="t43" style="left:486px;top:109.29px;font-size:11px;color:#2a2400;transform:translateX(-50%) scaleX(0.8653);">100 %</div>
<div class="t" id="t44" style="left:486px;top:139.29px;font-size:11px;color:#2a2400;transform:translateX(-50%) scaleX(0.8613);">89 %</div>
<div class="t" id="t45" style="left:583.3px;top:108.84px;font-size:12px;color:#000;font-weight:bold;transform:scaleX(0.8607);transform-origin:0 0;">Kiváló</div>
<div class="t" id="t46" style="left:583.3px;top:138.84px;font-size:12px;color:#000;font-weight:bold;transform:scaleX(0.8607);transform-origin:0 0;">Kiváló</div>
<div class="t" id="t47" style="left:264.2px;top:171.12px;font-size:11.2px;color:#142814;transform:scaleX(1.0217);transform-origin:0 0;">A mozgó alkatrész nélküli meghajtó (SSD) állapota hibátlan. Problémás vagy gyenge szektorok nem találhatóak.</div>
<div class="t" id="t48" style="left:264.2px;top:185.32px;font-size:11.2px;color:#142814;transform:scaleX(1.0044);transform-origin:0 0;">Az SSD TRIM funkciója támogatva és engedélyezve az optimális teljesítményhez.</div>
<div class="t" id="t49" style="left:264.2px;top:199.52px;font-size:11.2px;color:#142814;transform:scaleX(1.0076);transform-origin:0 0;">A kondíciót a következő SSD-specifikus S.M.A.R.T. attribútum(ok) értéke határozza meg:  #173 Media Wearout Indicator</div>
<div class="t" id="t50" style="left:264.2px;top:227.52px;font-size:11.2px;color:#0a1a0a;font-weight:bold;transform:scaleX(1.0058);transform-origin:0 0;">Nincs szükség beavatkozásra.</div>
<div class="t" id="t51" style="left:261.7px;top:295.54px;font-size:12px;color:#1a1a1a;transform:scaleX(0.9359);transform-origin:0 0;">Működési idő:</div>
<div class="t" id="t52" style="left:261.7px;top:310.14px;font-size:12px;color:#1a1a1a;transform:scaleX(0.9160);transform-origin:0 0;">Becsült hátralévő élettartam:</div>
<div class="t" id="t53" style="left:261.7px;top:324.84px;font-size:12px;color:#1a1a1a;transform:scaleX(0.8890);transform-origin:0 0;">Összes írt adatmennyiség:</div>
<div class="t" id="t54" style="left:432.2px;top:295.54px;font-size:12px;color:#000;font-weight:bold;transform:scaleX(0.8995);transform-origin:0 0;">49 nap, 16 óra</div>
<div class="t" id="t55" style="left:432.2px;top:310.14px;font-size:12px;color:#000;font-weight:bold;transform:scaleX(0.9190);transform-origin:0 0;">több mint 1000 nap</div>
<div class="t" id="t56" style="left:432.2px;top:324.84px;font-size:12px;color:#000;font-weight:bold;transform:scaleX(0.9153);transform-origin:0 0;">154,81 TB</div>
<div class="t" id="t57" style="left:264.5px;top:350.14px;font-size:12px;color:#747474;transform:scaleX(0.9070);transform-origin:0 0;">Kattintson megjegyzés megadásához ...</div>
<div class="t" id="t58" style="left:269.5px;top:380.34px;font-size:12px;color:#1a1a1a;transform:scaleX(0.9093);transform-origin:0 0;">Kondíció  (%)</div>
<div class="t" id="t59" style="left:2237px;top:302.34px;font-size:12px;color:#1a1a1a;transform:translateX(-50%) scaleX(0.8939);">Újratesztelés</div>
<div class="t" id="t60" style="left:2357px;top:911.69px;font-size:11px;color:#fff;transform:translateX(-50%) scaleX(0.9444);">20:39</div>
<div class="t" id="t61" style="left:2357.5px;top:927.19px;font-size:11px;color:#fff;transform:translateX(-50%) scaleX(1.0193);">csütörtök</div>
<div class="t" id="t62" style="left:2356.5px;top:943.19px;font-size:11px;color:#fff;transform:translateX(-50%) scaleX(0.9147);">2017. 11. 23.</div>
</body></html>
